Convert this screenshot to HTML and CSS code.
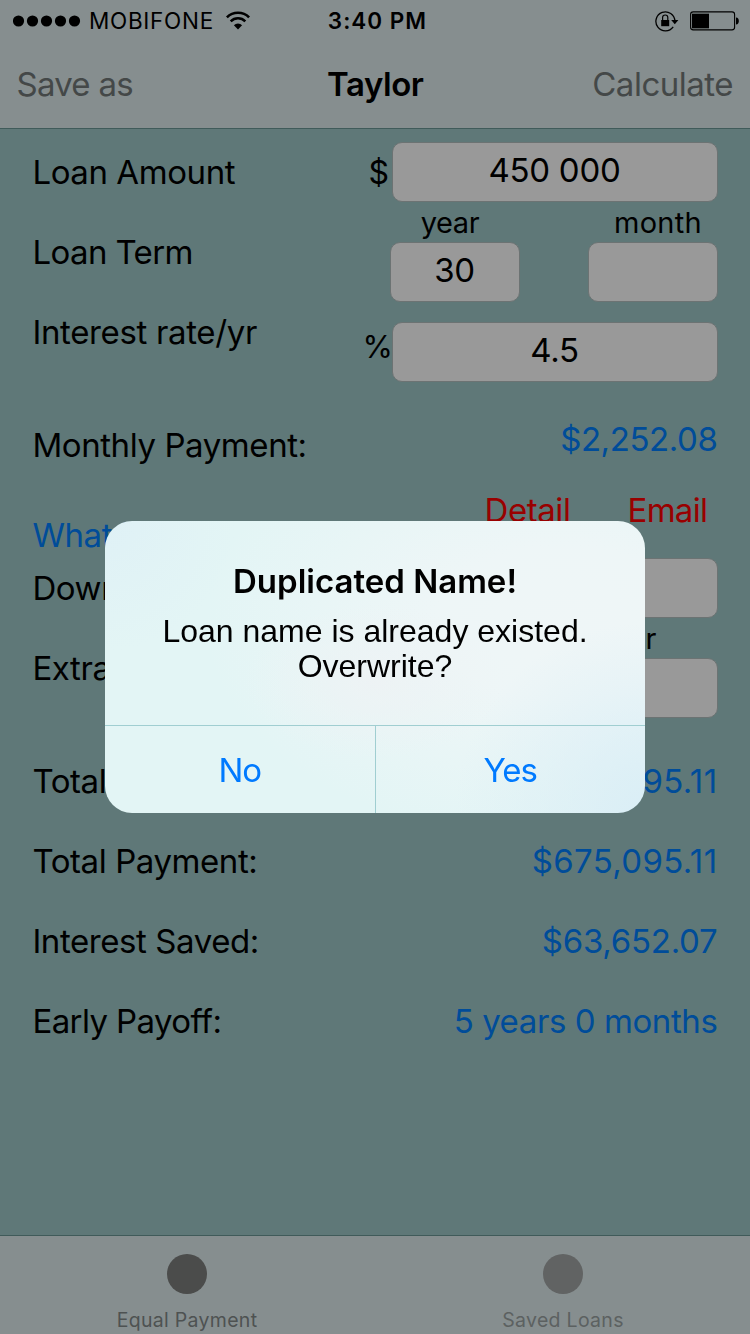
FILE: index.html
```
<!DOCTYPE html>
<html lang="en">
<head>
    <meta charset="UTF-8">
    <meta name="viewport" content="width=device-width, initial-scale=1.0">
    <title>Loan Calculator</title>
    <link rel="stylesheet" href="styles.css">
</head>
<body>
    <div class="screen">
        <header class="header">
            <div class="status-bar">
                <div class="carrier">
                    <svg class="signal" width="68" height="12" viewBox="0 0 68 12">
                        <circle cx="5.5" cy="6" r="5.6"/>
                        <circle cx="19.5" cy="6" r="5.6"/>
                        <circle cx="33.5" cy="6" r="5.6"/>
                        <circle cx="47.5" cy="6" r="5.6"/>
                        <circle cx="61.5" cy="6" r="5.6"/>
                    </svg>
                    <span class="carrier-name">MOBIFONE</span>
                    <svg class="wifi" width="26" height="20" viewBox="0 0 26 20">
                        <path d="M1.9 6.3a15.7 15.7 0 0 1 22.2 0" fill="none" stroke="#000" stroke-width="2.6"/>
                        <path d="M5.7 10.3a10.2 10.2 0 0 1 14.6 0" fill="none" stroke="#000" stroke-width="2.5"/>
                        <path d="M8.9 14.3a5.8 5.8 0 0 1 8.2 0L13 18.5z"/>
                    </svg>
                </div>
                <div class="time">3:40 PM</div>
                <div class="indicators">
                    <svg class="lock" width="24" height="22" viewBox="0 0 24 22">
                        <path d="M18.2 16.8A9.5 9.5 0 1 1 19.9 11" fill="none" stroke="#000" stroke-width="1.3"/>
                        <path d="M16.2 10h7.2l-3.6 4.2z"/>
                        <rect x="6.2" y="10" width="8" height="6.2"/>
                        <path d="M7.6 10.5V7.6a2.6 2.6 0 0 1 5.2 0v2.9" fill="none" stroke="#000" stroke-width="1.2"/>
                    </svg>
                    <svg class="battery" width="50" height="20" viewBox="0 0 50 20">
                        <rect x="0.6" y="0.9" width="44" height="18" rx="2.6" fill="none" stroke="#000" stroke-width="1.1"/>
                        <rect x="2" y="2.7" width="17" height="14.6"/>
                        <path d="M46 6.5c3.8 0 3.8 7 0 7z"/>
                    </svg>
                </div>
            </div>
            <nav class="nav-bar">
                <span class="nav-btn save">Save as</span>
                <h1 class="nav-title">Taylor</h1>
                <span class="nav-btn calculate">Calculate</span>
            </nav>
        </header>

        <main class="form">
            <div class="row amount">
                <label>Loan Amount</label>
                <span class="unit">$</span>
                <div class="field">450 000</div>
            </div>
            <div class="row term">
                <label class="tight">Loan Term</label>
                <div class="period">
                    <span class="caption year">year</span>
                    <div class="field">30</div>
                </div>
                <div class="period">
                    <span class="caption month">month</span>
                    <div class="field"></div>
                </div>
            </div>
            <div class="row rate">
                <label>Interest rate/yr</label>
                <span class="unit percent">%</span>
                <div class="field">4.5</div>
            </div>
            <div class="row monthly">
                <label>Monthly Payment:</label>
                <span class="value">$2,252.08</span>
            </div>
            <div class="row actions">
                <span class="what-if">What if</span>
                <span class="action">Detail</span>
                <span class="action email">Email</span>
            </div>
            <div class="row down">
                <label>Down</label>
                <div class="field"></div>
            </div>
            <div class="row term extra">
                <label>Extra</label>
                <div class="period">
                    <span class="caption year">year</span>
                    <div class="field"></div>
                </div>
            </div>
            <div class="results">
                <div class="row result">
                    <label>Total</label>
                    <span class="value spaced">95.11</span>
                </div>
                <div class="row result">
                    <label>Total Payment:</label>
                    <span class="value spaced">$675,095.11</span>
                </div>
                <div class="row result">
                    <label>Interest Saved:</label>
                    <span class="value saved">$63,652.07</span>
                </div>
                <div class="row result">
                    <label class="tight">Early Payoff:</label>
                    <span class="value">5 years 0 months</span>
                </div>
            </div>
        </main>

        <footer class="tab-bar">
            <div class="tab active">
                <span class="tab-icon"></span>
                <span class="tab-label">Equal Payment</span>
            </div>
            <div class="tab">
                <span class="tab-icon"></span>
                <span class="tab-label">Saved Loans</span>
            </div>
        </footer>
    </div>

    <div class="overlay">
        <div class="alert">
            <div class="alert-body">
                <h2 class="alert-title">Duplicated Name!</h2>
                <p class="alert-text">Loan name is already existed.<br>Overwrite?</p>
            </div>
            <div class="alert-buttons">
                <button class="alert-btn">No</button>
                <button class="alert-btn yes">Yes</button>
            </div>
        </div>
    </div>
</body>
</html>
```
FILE: styles.css
```
* {
    box-sizing: border-box;
}

body {
    margin: 0;
    font-family: Inter, "Liberation Sans", sans-serif;
    font-size: 33px;
    line-height: 40px;
    letter-spacing: -0.42px;
    color: #000;
    background-color: #5f7878;
}

.screen {
    display: flex;
    flex-direction: column;
    height: 1334px;
    overflow: hidden;
}

/* status bar + navigation */
.header {
    height: 129px;
    background-color: #868e8f;
    border-bottom: 1px solid #405b5a;
}

.status-bar {
    display: grid;
    grid-template-columns: 1fr auto 1fr;
    align-items: center;
    height: 40px;
    padding: 0 10px 0 13px;
    font-size: 22.5px;
}

.carrier {
    display: flex;
    align-items: center;
    letter-spacing: 0.7px;
}

.carrier-name {
    margin-left: 8px;
    padding-top: 1px;
}

.wifi {
    margin-left: 11px;
}

.time {
    padding: 1px 0 0 2px;
    font-weight: 600;
    letter-spacing: 1px;
}

.indicators {
    display: flex;
    justify-content: flex-end;
    align-items: center;
    gap: 11px;
}

.battery {
    margin-top: 1px;
}

.nav-bar {
    display: grid;
    grid-template-columns: 1fr auto 1fr;
    align-items: center;
    height: 88px;
    padding: 0 17px 0 16.5px;
}

.nav-btn {
    color: #444848;
}

.save {
    letter-spacing: -0.75px;
}

.calculate {
    text-align: right;
    letter-spacing: -0.5px;
}

.nav-title {
    margin: 0;
    padding-left: 1px;
    font-size: 33px;
    font-weight: 600;
}

/* form */
.form {
    flex: 1;
    padding: 13px 32px 0;
}

.row {
    display: flex;
    align-items: center;
}

.row label,
.what-if {
    flex: 1;
    padding-left: 0.4px;
}

.row .tight {
    letter-spacing: -0.6px;
}

.field {
    width: 326px;
    height: 60px;
    padding: 7px 1px 0 0;
    border: 1px solid #6c7373;
    border-radius: 10px;
    background-color: #999;
    text-align: center;
    letter-spacing: -0.3px;
}

.unit {
    margin-right: 3px;
    padding-top: 1px;
    letter-spacing: 0;
    font-size: 32px;
}

.percent {
    margin-right: -1px;
    font-size: 31px;
}

.term {
    height: 100px;
}

.period {
    display: flex;
    flex-direction: column;
    width: 130px;
    text-align: center;
}

.period + .period {
    margin-left: 68px;
}

.period .field {
    width: 130px;
}

.caption {
    height: 40px;
    padding-top: 1px;
    font-size: 29px;
}

.caption.year {
    padding-right: 10px;
}

.caption.month {
    padding-left: 10px;
    letter-spacing: 0.3px;
}

.rate {
    align-items: flex-start;
    height: 80px;
}

.rate label {
    margin-top: 10px;
    letter-spacing: -0.35px;
}

.rate .percent {
    margin-top: 24px;
}

.rate .field {
    margin-top: 20px;
}

.monthly {
    height: 108px;
    padding-top: 18px;
}

.monthly .value {
    margin-top: -12px;
}

.value {
    padding-right: 0.6px;
    color: #004c99;
}

.spaced {
    letter-spacing: 0.35px;
}

.saved {
    letter-spacing: -0.25px;
}

.actions {
    align-items: flex-start;
    height: 68px;
    color: #990000;
}

.what-if {
    padding-top: 25px;
    color: #004c99;
}

.action.email {
    width: 90.5px;
    margin-left: 57px;
    letter-spacing: -0.7px;
}

.extra .period {
    align-items: flex-end;
    width: 326px;
}

.extra .period .field {
    width: 326px;
}

.extra .caption.year {
    width: 264px;
    margin-right: 62px;
    padding-right: 0;
    text-align: right;
}

.results {
    padding-top: 23px;
}

.result {
    height: 80px;
}

/* tab bar */
.tab-bar {
    display: flex;
    justify-content: space-between;
    height: 99px;
    border-top: 1px solid #405b5a;
    background-color: #868e8f;
}

.tab {
    display: flex;
    flex-direction: column;
    align-items: center;
    width: 374px;
    padding-top: 18px;
    color: #5c6161;
}

.tab-icon {
    width: 40px;
    height: 40px;
    border-radius: 50%;
    background-color: #616363;
}

.tab-label {
    margin-top: 14px;
    font-size: 19.5px;
    line-height: 24px;
    letter-spacing: 0.3px;
}

.active {
    color: #4e5252;
}

.active .tab-icon {
    background-color: #4b4c4b;
}

/* alert */
.overlay {
    position: fixed;
    inset: 0;
    display: flex;
    justify-content: center;
    align-items: center;
}

.alert {
    width: 540px;
    height: 292px;
    border-radius: 27px;
    overflow: hidden;
    text-align: center;
    background:
        radial-gradient(circle at 0 0, #dff1f6 0, rgba(223, 241, 246, 0) 130px),
        radial-gradient(circle at 100% 100%, #daeef6 0, rgba(218, 238, 246, 0) 190px),
        radial-gradient(ellipse at 50% 55%, rgba(238, 242, 244, 0.8) 0, rgba(238, 242, 244, 0) 130px),
        radial-gradient(ellipse 360px 220px at 85% 35%, #eff6f7 0, #eef6f7 35%, rgba(239, 246, 247, 0) 100%),
        #e3f5f5;
}

.alert-body {
    height: 204px;
    padding-top: 40px;
}

.alert-title {
    margin: 0;
    font-size: 33px;
    font-weight: 600;
    letter-spacing: 0;
}

.alert-text {
    margin: 13px 0 0;
    font-family: "Liberation Sans", Arial, sans-serif;
    font-size: 32px;
    line-height: 35px;
    letter-spacing: 0;
}

.alert-buttons {
    display: flex;
    height: 88px;
    border-top: 1px solid #a0ced1;
}

.alert-btn {
    flex: 1;
    padding: 0;
    border: none;
    background: none;
    font-family: inherit;
    font-size: 33px;
    letter-spacing: -1px;
    color: #007aff;
}

.yes {
    border-left: 1px solid #a0ced1;
}
```
